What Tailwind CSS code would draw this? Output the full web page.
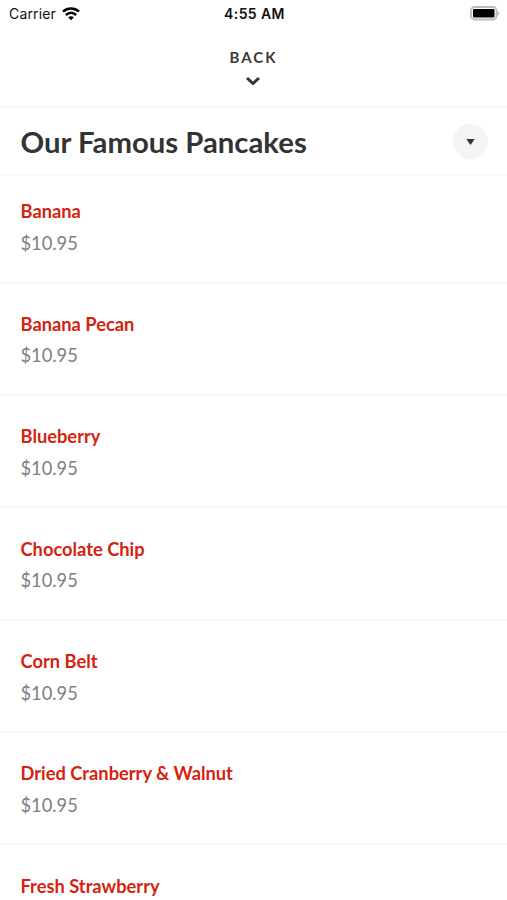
<!DOCTYPE html>
<html lang="en"><head><meta charset="utf-8"><title>Menu</title>
<script src="https://cdn.jsdelivr.net/npm/@tailwindcss/browser@4"></script></head>
<body class="bg-white overflow-hidden h-[900px] font-['Lato',sans-serif]">
<div class="grid grid-cols-3 items-center h-[27px] pl-[9px] pr-[7px] font-['Inter',sans-serif] text-[14px] text-[#111]">
<div class="flex items-center gap-[6px]"><span class="tracking-[0.15px]">Carrier</span>
<svg class="w-[18px] h-[14px]" viewBox="0 0 18 14" fill="none" stroke="#000" stroke-width="2.5"><path d="M1 4.700C5.500.5 12.500.5 17 4.700M3.800 8C7 5.200 11 5.200 14.200 8"/><path d="M6.200 10.300Q9 8.300 11.800 10.300L9 13.200Z" fill="#000" stroke="none"/></svg></div>
<div class="text-center font-semibold tracking-[0.4px]">4:55 AM</div>
<div class="flex justify-end"><svg class="w-[31px] h-[15px]" viewBox="0 0 31 15"><rect x="2" y="1" width="25.500" height="12.500" rx="3.500" fill="#fff" stroke="#bbb" stroke-width="1.800"/><rect x="4" y="3" width="21.500" height="8.500" rx="1"/><path d="M28.500 5q3 2.300 0 4.600z" fill="#aaa"/></svg></div>
</div>
<header class="h-[81px] border-b-2 border-[#f7f7f7] flex flex-col items-center pt-[20px] text-[#3a3a3a]">
<div class="text-[15px] leading-[20px] font-bold tracking-[2px]">BACK</div>
<svg class="mt-[9px] mr-[1px] w-[14px] h-[10px]" viewBox="0 0 14 10" fill="none" stroke="#333" stroke-width="3"><path d="M1 2L7 7.500L13 2"/></svg>
</header>
<div class="h-[68px] border-b-2 border-[#f7f7f7] flex items-center justify-between pl-[20.500px] pr-[19px]">
<h1 class="pt-[2px] text-[29.300px] font-bold text-[#333]">Our Famous Pancakes</h1>
<div class="size-[35px] rounded-full bg-[#f4f4f4] flex items-center justify-center"><svg class="w-[9px] h-[6px] mt-px" viewBox="0 0 9 6"><path d="M.3 0H8.700L4.500 6Z" fill="#333"/></svg></div>
</div>
<main id="list"></main>
<script>
const items=[['Banana','$10.95'],['Banana Pecan','$10.95'],['Blueberry','$10.95'],['Chocolate Chip','$10.95'],['Corn Belt','$10.95'],['Dried Cranberry & Walnut','$10.95'],['Fresh Strawberry']];
items.forEach(([name,price],i)=>{
const el=document.createElement('article');
el.className='pl-[20.500px] leading-[24px] '+(i===0?'h-[107.500px] pt-[23.400px] border-b-2 border-[#f7f7f7]':price?'h-[112.400px] pt-[28.400px] border-b-2 border-[#f7f7f7]':'h-[54px] pt-[28.400px]');
const h=document.createElement('h2');h.className='text-[18.300px] font-bold text-[#d4230f]';h.textContent=name;el.append(h);
if(price){const p=document.createElement('p');p.className='mt-[7.600px] text-[18.300px] text-[#808080]';p.textContent=price;el.append(p)}
document.getElementById('list').append(el)});
</script></body></html>
